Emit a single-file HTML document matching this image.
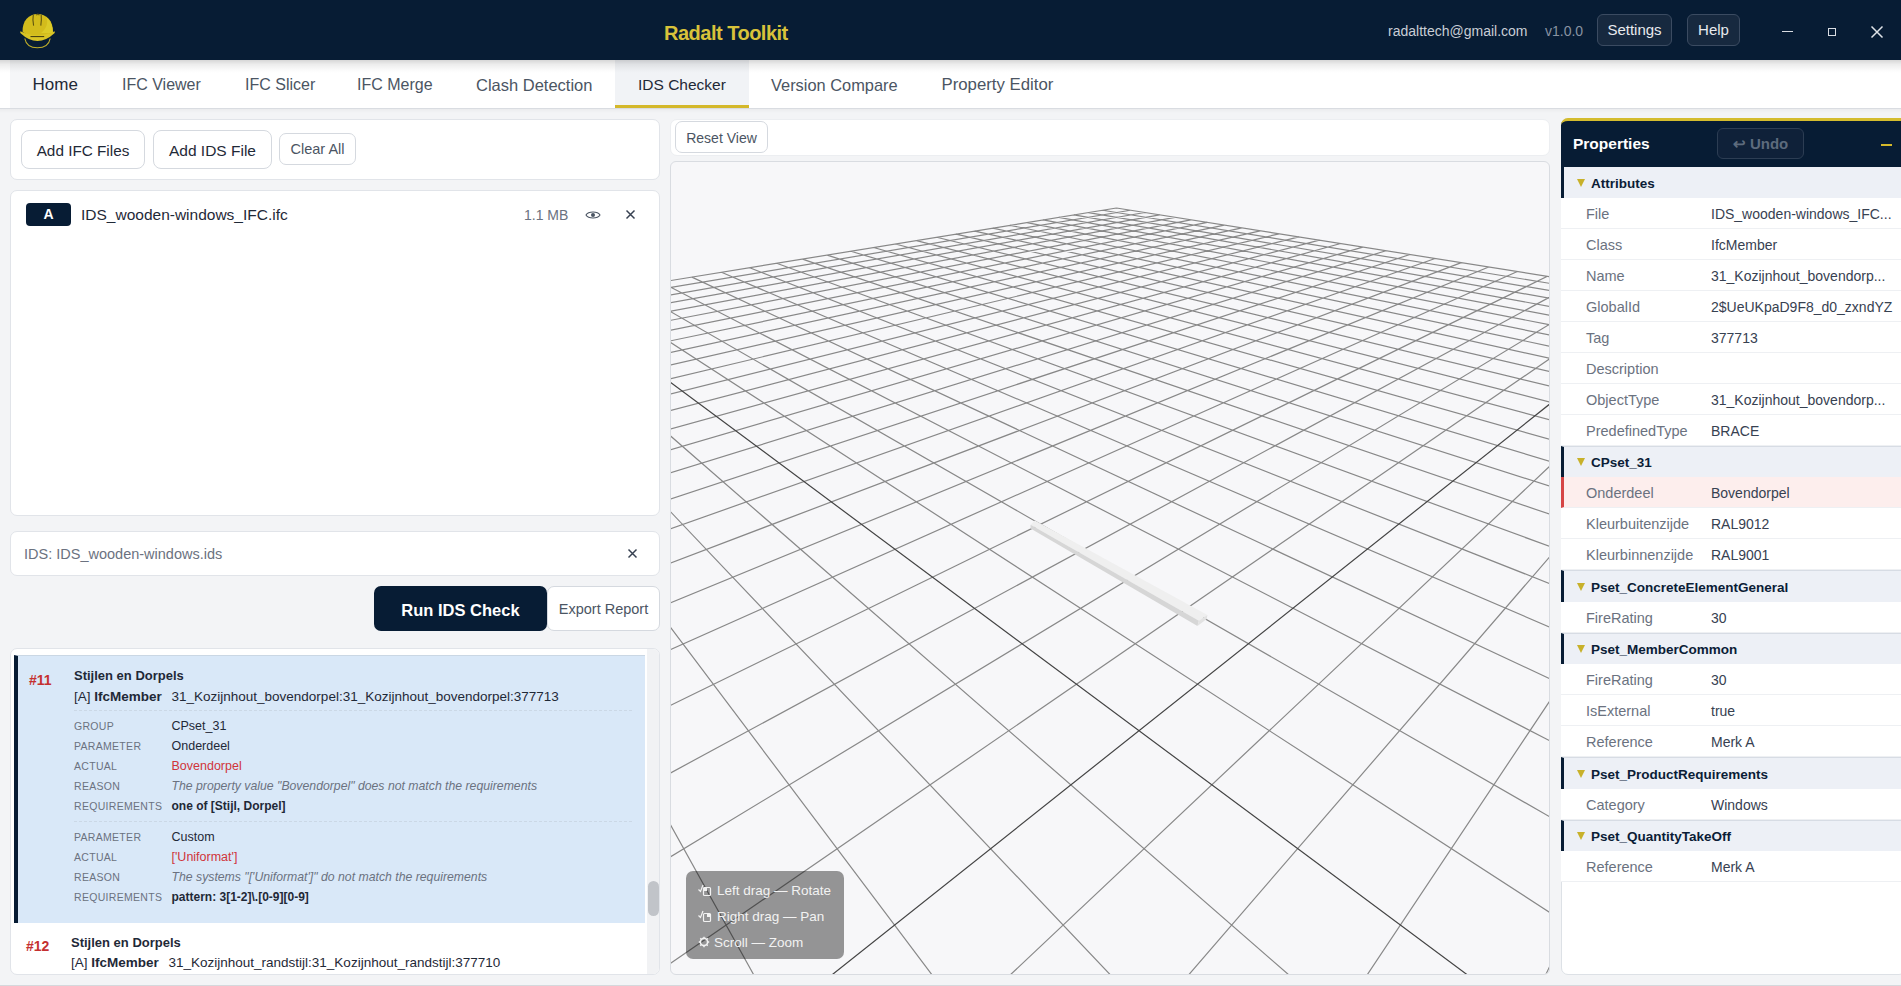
<!DOCTYPE html>
<html><head><meta charset="utf-8">
<style>
*{box-sizing:border-box;margin:0;padding:0}
html,body{width:1901px;height:986px;overflow:hidden}
body{background:#f3f4f6;font-family:"Liberation Sans",sans-serif;position:relative;color:#1f2937}
.a{position:absolute;white-space:nowrap}
.hdr{left:0;top:0;width:1901px;height:60px;background:#071c34}
.tabs{left:0;top:60px;width:1901px;height:49px;background:#fff;border-bottom:1px solid #d9dce1}
.tab{position:absolute;top:61px;height:48px;font-size:16px;color:#4b5563;line-height:48px}
.card{position:absolute;background:#fff;border:1px solid #e1e4e9;border-radius:7px}
.btn{position:absolute;background:#fff;border:1px solid #d5d9df;border-radius:8px;font-size:15px;color:#1f2937;text-align:center}
.lbl{position:absolute;font-size:10.5px;letter-spacing:.3px;color:#6b7280;white-space:nowrap}
.val{position:absolute;font-size:12.5px;color:#1f2937;white-space:nowrap}
.prow{position:absolute;left:1561px;width:340px;height:31px;border-bottom:1px solid #eef0f3;background:#fff}
.prow .k{position:absolute;left:25px;top:1px;line-height:31px;font-size:14.5px;color:#6b7280;white-space:nowrap}
.prow .v{position:absolute;left:150px;top:1px;line-height:31px;font-size:14px;color:#374151;white-space:nowrap}
.psec{position:absolute;left:1561px;width:340px;background:#edf0f6;border-top:1px solid #d7dce4;border-left:3px solid #071c34}
.psec .t{position:absolute;left:13px;top:11.5px;width:0;height:0;border-left:4.5px solid transparent;border-right:4.5px solid transparent;border-top:8px solid #c8b12a}
.psec .n{position:absolute;left:27px;top:0.5px;line-height:31px;font-size:13.5px;font-weight:700;color:#0b1d36;white-space:nowrap}
</style></head>
<body>
<!-- header -->
<div class="a hdr"></div>
<svg class="a" style="left:15px;top:8px" width="45" height="45" viewBox="0 0 45 45">
  <path d="M7.6 24 C7 12.5 14 5.9 22.6 5.9 C31.2 5.9 38.4 12.5 37.9 24 Q22.4 34 7.6 24 Z" fill="#d3bc1c"/>
  <path d="M26 25 C31 21 34 15 31 9 C35 12 38 18 37.9 25 Z" fill="#dccb28"/>
  <path d="M18.3 6.8 C17.6 11 18 15 18.6 17.6 M26.2 6.8 C26.6 11 26.2 15 25.8 17.6 M21.5 7.2 C22.5 5.6 23.5 5.6 24.3 7.2" stroke="#5e5410" stroke-width="1.1" fill="none"/>
  <path d="M5.3 23.3 Q22.4 31.5 39.7 23.3 L39.7 24.9 Q22.4 41 5.3 24.9 Z" fill="#d9c425"/>
  <path d="M15.5 28.6 L29.2 28.6" stroke="#3a3510" stroke-width="1"/>
  <path d="M9.8 30.5 C11 37 16 39.8 22.4 39.8 C29 39.8 34 37 35.2 30.5" stroke="#bfae2a" stroke-width="1.1" fill="none"/>
</svg>
<div class="a" style="left:664px;top:21px;font-size:20px;font-weight:700;color:#d8c23a;line-height:24px;letter-spacing:-.5px">Radalt Toolkit</div>
<div class="a" style="left:1388px;top:22px;font-size:14px;color:#c9ced6;line-height:18px">radalttech@gmail.com</div>
<div class="a" style="left:1545px;top:22px;font-size:14px;color:#8893a2;line-height:18px">v1.0.0</div>
<div class="a" style="left:1597px;top:14px;width:75px;height:32px;border:1px solid #3b4b61;border-radius:6px;background:#17293f;color:#e8eaee;font-size:15px;line-height:30px;text-align:center">Settings</div>
<div class="a" style="left:1687px;top:14px;width:53px;height:32px;border:1px solid #3b4b61;border-radius:6px;background:#17293f;color:#e8eaee;font-size:15px;line-height:30px;text-align:center">Help</div>
<div class="a" style="left:1782px;top:31px;width:11px;height:1px;background:#d8dce2"></div>
<div class="a" style="left:1828px;top:28px;width:8px;height:8px;border:1.3px solid #d8dce2"></div>
<svg class="a" style="left:1870px;top:25px" width="14" height="14"><path d="M1.5 1.5L12.5 12.5M12.5 1.5L1.5 12.5" stroke="#dfe3e8" stroke-width="1.5"/></svg>

<!-- tabs -->
<div class="a tabs"></div>
<div class="a" style="left:10px;top:60px;width:90px;height:48px;background:#f5f6f8"></div>
<div class="tab" style="left:32.5px;color:#1f2937;font-size:17px">Home</div>
<div class="tab" style="left:122px">IFC Viewer</div>
<div class="tab" style="left:245px">IFC Slicer</div>
<div class="tab" style="left:357px">IFC Merge</div>
<div class="tab" style="left:476px;font-size:16.5px">Clash Detection</div>
<div class="a" style="left:615px;top:60px;width:134px;height:48px;background:#f1f3f6;border-bottom:3px solid #d4b82a"></div>
<div class="tab" style="left:638px;color:#1f2937;font-size:15.5px">IDS Checker</div>
<div class="a" style="left:0;top:60px;width:1901px;height:13px;background:linear-gradient(rgba(0,0,0,.16),rgba(0,0,0,.07) 35%,rgba(0,0,0,.015) 80%,rgba(0,0,0,0))"></div>
<div class="tab" style="left:771px;font-size:16.4px">Version Compare</div>
<div class="tab" style="left:941.5px;font-size:16.8px">Property Editor</div>

<div class="a" style="left:0;top:109px;width:1901px;height:4px;background:linear-gradient(rgba(0,0,0,.035),rgba(0,0,0,0))"></div>
<!-- left column -->
<div class="card" style="left:10px;top:119px;width:650px;height:61px"></div>
<div class="btn" style="left:21px;top:130px;width:124px;height:39px;line-height:39px;font-size:15.3px">Add IFC Files</div>
<div class="btn" style="left:153px;top:130px;width:119px;height:39px;line-height:39px;font-size:15.5px">Add IDS File</div>
<div class="btn" style="left:279px;top:133px;width:77px;height:32px;line-height:31px;font-size:14.5px;color:#4b5563;border-radius:7px">Clear All</div>

<div class="card" style="left:10px;top:190px;width:650px;height:326px"></div>
<div class="a" style="left:26px;top:203px;width:45px;height:23px;background:#071c34;border-radius:4px;color:#fff;font-weight:700;font-size:14px;line-height:23px;text-align:center">A</div>
<div class="a" style="left:81px;top:205px;font-size:15.5px;color:#1f2937;line-height:20px">IDS_wooden-windows_IFC.ifc</div>
<div class="a" style="left:524px;top:205px;font-size:14px;color:#6b7280;line-height:20px">1.1 MB</div>
<svg class="a" style="left:584px;top:209px" width="18" height="12" viewBox="0 0 18 12"><path d="M2 6 C4.5 2 13.5 2 16 6 C13.5 10 4.5 10 2 6Z" fill="none" stroke="#4b5563" stroke-width="1.1"/><circle cx="9" cy="6" r="2" fill="#4b5563"/></svg>
<svg class="a" style="left:625px;top:209px" width="11" height="11"><path d="M1.5 1.5L9.5 9.5M9.5 1.5L1.5 9.5" stroke="#374151" stroke-width="1.5"/></svg>

<div class="card" style="left:10px;top:531px;width:650px;height:45px"></div>
<div class="a" style="left:24px;top:544px;font-size:14.5px;color:#6b7280;line-height:20px">IDS: IDS_wooden-windows.ids</div>
<svg class="a" style="left:627px;top:548px" width="11" height="11"><path d="M1.5 1.5L9.5 9.5M9.5 1.5L1.5 9.5" stroke="#374151" stroke-width="1.5"/></svg>

<div class="a" style="left:374px;top:586px;width:173px;height:45px;background:#071c34;border-radius:7px;color:#fff;font-size:16.5px;font-weight:700;line-height:48px;text-align:center">Run IDS Check</div>
<div class="btn" style="left:547px;top:586px;width:113px;height:45px;line-height:45px;font-size:14.5px;color:#4b5563;border-radius:7px">Export Report</div>

<div class="card" style="left:10px;top:648px;width:650px;height:327px;overflow:hidden">
  <div style="position:absolute;left:636px;top:0;width:14px;height:327px;background:#f1f2f4"></div>
  <div style="position:absolute;left:637px;top:232px;width:11px;height:35px;background:#c1c4c9;border-radius:6px"></div>
  <div style="position:absolute;left:3px;top:6px;width:631px;height:268px;background:#d9e8f8;border-left:4px solid #071c34;border-top:1px solid #cad7e4"></div>
</div>
<div class="a" style="left:29px;top:672px;font-size:14px;font-weight:700;color:#c53030;line-height:16px">#11</div>
<div class="a" style="left:74px;top:667px;font-size:13px;color:#1f2937;line-height:17px;font-weight:700">Stijlen en Dorpels</div>
<div class="a" style="left:74px;top:688px;font-size:13.5px;color:#1f2937;line-height:17px">[A] <b style="-webkit-text-stroke:0">IfcMember</b></div>
<div class="a" style="left:171.5px;top:688px;font-size:13.5px;color:#1f2937;line-height:17px">31_Kozijnhout_bovendorpel:31_Kozijnhout_bovendorpel:377713</div>
<div class="a" style="left:74px;top:710px;width:558px;height:0;border-top:1px dashed #cbd8e6"></div>
<div class="lbl" style="left:74px;top:719.7px">GROUP</div><div class="val" style="left:171.5px;top:718.5px">CPset_31</div>
<div class="lbl" style="left:74px;top:739.7px">PARAMETER</div><div class="val" style="left:171.5px;top:738.5px">Onderdeel</div>
<div class="lbl" style="left:74px;top:759.7px">ACTUAL</div><div class="val" style="left:171.5px;top:758.5px;color:#d0343a">Bovendorpel</div>
<div class="lbl" style="left:74px;top:779.7px">REASON</div><div class="val" style="left:171.5px;top:778.5px;color:#6b7280;font-style:italic;font-size:12.25px">The property value "Bovendorpel" does not match the requirements</div>
<div class="lbl" style="left:74px;top:799.7px">REQUIREMENTS</div><div class="val" style="left:171.5px;top:798.5px;font-weight:700;font-size:12px">one of [Stijl, Dorpel]</div>
<div class="a" style="left:74px;top:821px;width:558px;height:0;border-top:1px dashed #cbd8e6"></div>
<div class="lbl" style="left:74px;top:830.7px">PARAMETER</div><div class="val" style="left:171.5px;top:829.5px">Custom</div>
<div class="lbl" style="left:74px;top:850.7px">ACTUAL</div><div class="val" style="left:171.5px;top:849.5px;color:#d0343a">['Uniformat']</div>
<div class="lbl" style="left:74px;top:870.7px">REASON</div><div class="val" style="left:171.5px;top:869.5px;color:#6b7280;font-style:italic;font-size:12.25px">The systems "['Uniformat']" do not match the requirements</div>
<div class="lbl" style="left:74px;top:890.7px">REQUIREMENTS</div><div class="val" style="left:171.5px;top:889.5px;font-weight:700;font-size:12px">pattern: 3[1-2]\.[0-9][0-9]</div>
<div class="a" style="left:26px;top:938px;font-size:14px;font-weight:700;color:#c53030;line-height:16px">#12</div>
<div class="a" style="left:71px;top:934px;font-size:13px;color:#1f2937;line-height:17px;font-weight:700">Stijlen en Dorpels</div>
<div class="a" style="left:71px;top:954px;font-size:13.5px;color:#1f2937;line-height:17px">[A] <b>IfcMember</b></div>
<div class="a" style="left:168.5px;top:954px;font-size:13.5px;color:#1f2937;line-height:17px">31_Kozijnhout_randstijl:31_Kozijnhout_randstijl:377710</div>

<!-- middle -->
<div class="card" style="left:670px;top:119px;width:880px;height:37px;border-color:#eceef1"></div>
<div class="btn" style="left:675px;top:121px;width:93px;height:32px;line-height:32px;font-size:14px;color:#4b5563;border-radius:7px">Reset View</div>
<div class="a" style="left:670px;top:161px;width:880px;height:814px;border:1px solid #d9dce1;border-radius:6px;background:#f7f7f9;overflow:hidden">
<svg width="880" height="814" style="position:absolute;left:-1px;top:-1px"><path d="M-20.00 122.90L446.47 47.03M-20.00 129.92L460.38 49.24M-20.00 137.42L474.75 51.51M-20.00 145.45L489.60 53.86M-20.00 154.06L504.95 56.29M-20.00 163.32L520.83 58.81M-20.00 173.32L537.27 61.41M-20.00 184.13L554.29 64.11M-20.00 195.87L571.92 66.90M-20.00 208.66L590.21 69.80M-20.00 222.65L609.19 72.80M-20.00 238.01L628.90 75.92M-20.00 254.95L649.38 79.16M-20.00 273.73L670.67 82.54M-20.00 294.68L692.83 86.05M-20.00 318.19L715.92 89.70M-20.00 344.75L739.98 93.51M-20.00 375.01L765.08 97.49M-20.00 409.79L791.30 101.64M-20.00 450.19L818.71 105.98M-20.00 497.69L847.39 110.52M-20.00 554.34L877.43 115.28M-20.00 626.98L94.93 834.00M-20.00 623.08L900.00 125.10M-20.00 439.05L277.18 834.00M-20.00 708.21L900.00 150.94M-20.00 329.14L459.52 834.00M-20.00 816.42L900.00 183.79M-20.00 257.03L641.94 834.00M318.91 834.00L900.00 286.12M-20.00 168.15L900.00 764.59M501.27 834.00L900.00 372.34M-20.00 138.83L900.00 667.50M683.73 834.00L900.00 509.58M-9.07 121.13L900.00 590.19M866.27 834.00L900.00 762.15M21.92 116.09L900.00 527.17M51.48 111.28L900.00 474.82M79.71 106.69L900.00 430.63M106.69 102.30L900.00 392.85M132.50 98.10L900.00 360.16M157.22 94.08L900.00 331.61M180.91 90.23L900.00 306.45M203.65 86.53L900.00 284.12M225.48 82.98L900.00 264.16M246.46 79.56L900.00 246.21M266.63 76.28L900.00 229.99M286.05 73.13L900.00 215.25M304.75 70.08L900.00 201.81M322.78 67.15L900.00 189.50M340.16 64.32L900.00 178.18M356.94 61.59L900.00 167.73M373.14 58.96L900.00 158.07M388.80 56.41L900.00 149.10M403.93 53.95L900.00 140.75M418.57 51.57L900.00 132.96M432.74 49.26L900.00 125.68M446.47 47.03L900.00 118.85" stroke="#888888" stroke-width="1.2" fill="none"/><path d="M136.63 834.00L900.00 226.94M-20.00 206.07L824.46 834.00" stroke="#444444" stroke-width="1.2" fill="none"/><polygon points="364.85,359.59 537.42,454.04 528.89,459.72 360.59,363.85" fill="#efefef"/><polygon points="360.59,363.85 528.89,459.72 527.47,465.12 360.59,367.41" fill="#d6d6d6"/><polygon points="528.89,459.72 537.42,454.04 536.71,458.02 527.47,465.12" fill="#e2e2e2"/></svg>
<div style="position:absolute;left:15px;top:709px;width:158px;height:88px;border-radius:7px;background:rgba(0,0,0,.4);color:#fff"></div>
</div>
<svg class="a" style="left:697px;top:882px" width="16" height="16" viewBox="0 0 16 16"><path d="M1.5 7.5 L3.5 9.5 L6 3" stroke="#f2f2f2" stroke-width="1.2" fill="none"/><rect x="6.5" y="5.5" width="7" height="8" rx="1" stroke="#f2f2f2" stroke-width="1.2" fill="none"/><rect x="7" y="6" width="3" height="3" fill="#f2f2f2"/></svg>
<svg class="a" style="left:697px;top:908px" width="16" height="16" viewBox="0 0 16 16"><path d="M1.5 7.5 L3.5 9.5 L6 3" stroke="#f2f2f2" stroke-width="1.2" fill="none"/><rect x="6.5" y="5.5" width="7" height="8" rx="1" stroke="#f2f2f2" stroke-width="1.2" fill="none"/><rect x="10" y="6" width="3" height="3" fill="#f2f2f2"/></svg>
<svg class="a" style="left:698px;top:936px" width="12" height="12" viewBox="0 0 12 12"><circle cx="6" cy="6" r="3.6" stroke="#f2f2f2" stroke-width="1.6" fill="none"/><path d="M6 0.8V2.4M6 9.6V11.2M0.8 6H2.4M9.6 6H11.2M2.3 2.3L3.4 3.4M8.6 8.6L9.7 9.7M2.3 9.7L3.4 8.6M8.6 3.4L9.7 2.3" stroke="#f2f2f2" stroke-width="1.4"/></svg>
<div class="a" style="left:717px;top:882px;font-size:13.5px;color:#f2f2f2;line-height:18px">Left drag — Rotate</div>
<div class="a" style="left:717px;top:908px;font-size:13.5px;color:#f2f2f2;line-height:18px">Right drag — Pan</div>
<div class="a" style="left:714px;top:934px;font-size:13.5px;color:#f2f2f2;line-height:18px">Scroll — Zoom</div>

<!-- right properties panel -->
<div class="a" style="left:1561px;top:118px;width:345px;height:857px;background:#fff;border:1px solid #dde1e6;border-radius:7px"></div>
<div class="a" style="left:1561px;top:118px;width:345px;height:48px;background:#071c34;border-top:3px solid #d4bc2e;border-radius:7px 0 0 0"></div>
<div class="a" style="left:1573px;top:134px;font-size:15.5px;font-weight:700;color:#fff;line-height:20px">Properties</div>
<div class="a" style="left:1717px;top:128px;width:87px;height:31px;border:1px solid #2c3d53;border-radius:6px;background:#0f2139;color:#5d6b7d;font-size:15px;font-weight:700;line-height:29px;text-align:center">&#8617; Undo</div>
<div class="a" style="left:1881px;top:144px;width:11px;height:2px;background:#d4b82a"></div>

<div class="psec" style="top:166.0px;height:31.5px;border-top-color:#071c34;"><div class="t"></div><div class="n">Attributes</div></div>
<div class="prow" style="top:197.5px"><div class="k">File</div><div class="v">IDS_wooden-windows_IFC...</div></div>
<div class="prow" style="top:228.5px"><div class="k">Class</div><div class="v">IfcMember</div></div>
<div class="prow" style="top:259.5px"><div class="k">Name</div><div class="v">31_Kozijnhout_bovendorp...</div></div>
<div class="prow" style="top:290.5px"><div class="k">GlobalId</div><div class="v">2$UeUKpaD9F8_d0_zxndYZ</div></div>
<div class="prow" style="top:321.5px"><div class="k">Tag</div><div class="v">377713</div></div>
<div class="prow" style="top:352.5px"><div class="k">Description</div><div class="v"></div></div>
<div class="prow" style="top:383.5px"><div class="k">ObjectType</div><div class="v">31_Kozijnhout_bovendorp...</div></div>
<div class="prow" style="top:414.5px"><div class="k">PredefinedType</div><div class="v">BRACE</div></div>
<div class="psec" style="top:445.5px;height:31.5px;"><div class="t"></div><div class="n">CPset_31</div></div>
<div class="prow" style="top:477.0px;background:#fdeeed;border-left:3px solid #d64545;"><div class="k" style="left:22px">Onderdeel</div><div class="v" style="left:147px">Bovendorpel</div></div>
<div class="prow" style="top:508.0px"><div class="k">Kleurbuitenzijde</div><div class="v">RAL9012</div></div>
<div class="prow" style="top:539.0px"><div class="k">Kleurbinnenzijde</div><div class="v">RAL9001</div></div>
<div class="psec" style="top:570.0px;height:31.5px;"><div class="t"></div><div class="n">Pset_ConcreteElementGeneral</div></div>
<div class="prow" style="top:601.5px"><div class="k">FireRating</div><div class="v">30</div></div>
<div class="psec" style="top:632.5px;height:31.5px;"><div class="t"></div><div class="n">Pset_MemberCommon</div></div>
<div class="prow" style="top:664.0px"><div class="k">FireRating</div><div class="v">30</div></div>
<div class="prow" style="top:695.0px"><div class="k">IsExternal</div><div class="v">true</div></div>
<div class="prow" style="top:726.0px"><div class="k">Reference</div><div class="v">Merk A</div></div>
<div class="psec" style="top:757.0px;height:31.5px;"><div class="t"></div><div class="n">Pset_ProductRequirements</div></div>
<div class="prow" style="top:788.5px"><div class="k">Category</div><div class="v">Windows</div></div>
<div class="psec" style="top:819.5px;height:31.5px;"><div class="t"></div><div class="n">Pset_QuantityTakeOff</div></div>
<div class="prow" style="top:851.0px"><div class="k">Reference</div><div class="v">Merk A</div></div>
<div class="a" style="left:0;top:985px;width:1901px;height:1px;background:#d5d8dc"></div>
</body></html>
